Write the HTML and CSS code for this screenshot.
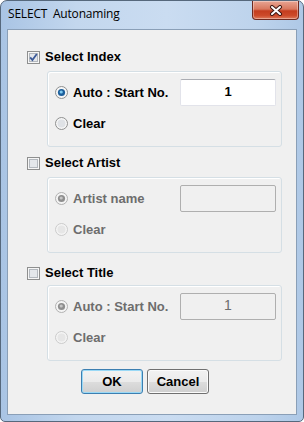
FILE: index.html
```html
<!DOCTYPE html>
<html lang="en">
<head>
  <meta charset="UTF-8">
  <title>SELECT Autonaming</title>
  <link rel="stylesheet" href="styles.css">
</head>
<body>
  <div class="window">
    <div class="titlebar">
      <span class="title">SELECT&nbsp; Autonaming</span>
      <button class="close" aria-label="Close">
        <svg width="14" height="11" viewBox="0 0 14 11">
          <path d="M3 2l8 7M11 2l-8 7" stroke="#3e1712" stroke-width="4" stroke-linecap="round" fill="none"/>
          <path d="M3 2l8 7M11 2l-8 7" stroke="#fff" stroke-width="2" stroke-linecap="round" fill="none"/>
        </svg>
      </button>
    </div>

    <div class="client">
      <!-- Index -->
      <div class="check-row">
        <svg class="box" width="13" height="13" viewBox="0 0 13 13">
          <rect x="0.5" y="0.5" width="12" height="12" fill="#f6f6f6" stroke="#8e8f8f"/>
          <rect x="2.5" y="2.5" width="8" height="8" fill="#e4e7eb" stroke="#b3b8be"/>
          <path d="M3.2 6.4l2.2 2.6 4.4-6" fill="none" stroke="#3b5998" stroke-width="1.8"/>
        </svg>
        <span>Select Index</span>
      </div>
      <div class="group group-first">
        <div class="opt-row">
          <svg class="radio" width="13" height="13" viewBox="0 0 13 13">
            <circle cx="6.5" cy="6.5" r="6" fill="#f6f6f6" stroke="#8e8f8f"/>
            <circle cx="6.5" cy="6.5" r="3.6" fill="#1d5f9c"/>
            <circle cx="6.2" cy="6" r="1.6" fill="#7fcbf2"/>
          </svg>
          <span class="opt-label">Auto : Start No.</span>
          <div class="field">1</div>
        </div>
        <div class="opt-row opt-row-clear">
          <svg class="radio" width="13" height="13" viewBox="0 0 13 13">
            <circle cx="6.5" cy="6.5" r="6" fill="#f6f6f6" stroke="#8e8f8f"/>
            <circle cx="6.5" cy="6.5" r="4" fill="#dfe2e6"/>
          </svg>
          <span class="opt-label">Clear</span>
        </div>
      </div>

      <!-- Artist -->
      <div class="check-row check-artist">
        <svg class="box" width="13" height="13" viewBox="0 0 13 13">
          <rect x="0.5" y="0.5" width="12" height="12" fill="#f6f6f6" stroke="#8e8f8f"/>
          <rect x="2.5" y="2.5" width="8" height="8" fill="#e4e7eb" stroke="#b3b8be"/>
        </svg>
        <span>Select Artist</span>
      </div>
      <div class="group group-artist disabled">
        <div class="opt-row">
          <svg class="radio" width="13" height="13" viewBox="0 0 13 13">
            <circle cx="6.5" cy="6.5" r="6" fill="#f4f4f4" stroke="#b1b1b1"/>
            <circle cx="6.5" cy="6.5" r="3.6" fill="#8e8e8e"/>
            <circle cx="6.2" cy="6" r="1.6" fill="#c6c6c6"/>
          </svg>
          <span class="opt-label">Artist name</span>
          <div class="field"></div>
        </div>
        <div class="opt-row opt-row-clear">
          <svg class="radio" width="13" height="13" viewBox="0 0 13 13">
            <circle cx="6.5" cy="6.5" r="6" fill="#f4f4f4" stroke="#cbcbcb"/>
            <circle cx="6.5" cy="6.5" r="4" fill="#e6e6e6"/>
          </svg>
          <span class="opt-label">Clear</span>
        </div>
      </div>

      <!-- Title -->
      <div class="check-row check-title">
        <svg class="box" width="13" height="13" viewBox="0 0 13 13">
          <rect x="0.5" y="0.5" width="12" height="12" fill="#f6f6f6" stroke="#8e8f8f"/>
          <rect x="2.5" y="2.5" width="8" height="8" fill="#e4e7eb" stroke="#b3b8be"/>
        </svg>
        <span>Select Title</span>
      </div>
      <div class="group group-title disabled">
        <div class="opt-row">
          <svg class="radio" width="13" height="13" viewBox="0 0 13 13">
            <circle cx="6.5" cy="6.5" r="6" fill="#f4f4f4" stroke="#b1b1b1"/>
            <circle cx="6.5" cy="6.5" r="3.6" fill="#8e8e8e"/>
            <circle cx="6.2" cy="6" r="1.6" fill="#c6c6c6"/>
          </svg>
          <span class="opt-label">Auto : Start No.</span>
          <div class="field">1</div>
        </div>
        <div class="opt-row opt-row-clear">
          <svg class="radio" width="13" height="13" viewBox="0 0 13 13">
            <circle cx="6.5" cy="6.5" r="6" fill="#f4f4f4" stroke="#cbcbcb"/>
            <circle cx="6.5" cy="6.5" r="4" fill="#e6e6e6"/>
          </svg>
          <span class="opt-label">Clear</span>
        </div>
      </div>

      <div class="buttons">
        <button class="btn btn-default">OK</button>
        <button class="btn">Cancel</button>
      </div>
    </div>
  </div>
</body>
</html>
```

FILE: styles.css
```css
* {
  box-sizing: border-box;
}

body {
  margin: 0;
  background: #fff;
  font-family: "Liberation Sans", Arial, sans-serif;
  color: #000;
}

.window {
  width: 304px;
  height: 422px;
  border: 1px solid #56687c;
  border-radius: 7px 7px 5px 5px;
  background: linear-gradient(to right, #a9c4e4 0, #c3d7ee 25%, #cadcf1 55%, #bdd3ec 85%, #aec8e6 100%);
  padding: 0 6px 6px;
  display: flex;
  flex-direction: column;
}

.titlebar {
  height: 28px;
  display: flex;
  align-items: flex-start;
}

.title {
  font-family: "Open Sans", sans-serif;
  font-size: 12px;
  line-height: 16px;
  margin-top: 5px;
  padding-left: 1px;
  letter-spacing: -0.2px;
}

.close {
  margin-left: auto;
  margin-right: -2px;
  width: 47px;
  height: 19px;
  padding: 0;
  border: 1px solid #6e2a20;
  border-top: none;
  border-radius: 0 0 4px 4px;
  background: linear-gradient(#e8a593 0%, #d9785f 45%, #c43d1f 55%, #cc4a2a 80%, #de7a5b 100%);
  box-shadow: inset 0 0 0 1px rgba(255, 255, 255, 0.35);
  display: flex;
  align-items: center;
  justify-content: center;
}

.client {
  flex: 1;
  border: 1px solid #8a9fb7;
  background: #f0f0f0;
  padding: 19px 0 0 19px;
}

.check-row {
  height: 16px;
  display: flex;
  align-items: center;
  font-size: 13px;
  font-weight: bold;
  line-height: 16px;
}

.check-row span {
  margin-left: 5px;
}

.check-artist {
  margin-top: 8px;
}

.check-title {
  margin-top: 12px;
}

.group {
  margin-left: 20px;
  width: 235px;
  height: 76px;
  border: 1px solid #d5dfe5;
  border-radius: 3px;
  box-shadow: inset 1px 1px 0 #fff;
  padding: 7px 5px 0 7px;
}

.group-first,
.group-artist {
  margin-top: 6px;
}

.group-title {
  margin-top: 4px;
}

.opt-row {
  height: 27px;
  display: flex;
  align-items: center;
  font-size: 13px;
  font-weight: bold;
}

.opt-label {
  margin-left: 5px;
}

.opt-row-clear {
  height: 18px;
  margin-top: 8px;
}

.field {
  margin-left: auto;
  width: 96px;
  height: 27px;
  background: #fff;
  border: 1px solid #e2e3ea;
  border-top-color: #abadb3;
  border-radius: 2px;
  text-align: center;
  line-height: 23px;
  font-size: 13px;
  font-weight: bold;
}

.disabled .opt-label,
.disabled .field {
  color: #6d6d6d;
}

.disabled .field {
  background: #f0f0f0;
  border-color: #afafaf;
  font-weight: normal;
  font-size: 14px;
}

.buttons {
  margin-top: 8px;
  margin-left: 54px;
  display: flex;
  gap: 4px;
}

.btn {
  width: 62px;
  height: 25px;
  padding: 0;
  font-family: "Liberation Sans", Arial, sans-serif;
  font-size: 13px;
  font-weight: bold;
  color: #000;
  border: 1px solid #707070;
  border-radius: 3px;
  background: linear-gradient(#f2f2f2 0%, #ebebeb 50%, #dddddd 51%, #cfcfcf 100%);
  box-shadow: inset 0 0 0 1px #fbfbfb;
}

.btn-default {
  border-color: #3c7fb1;
  box-shadow: inset 0 0 0 1px #9ad9f6;
}
```
